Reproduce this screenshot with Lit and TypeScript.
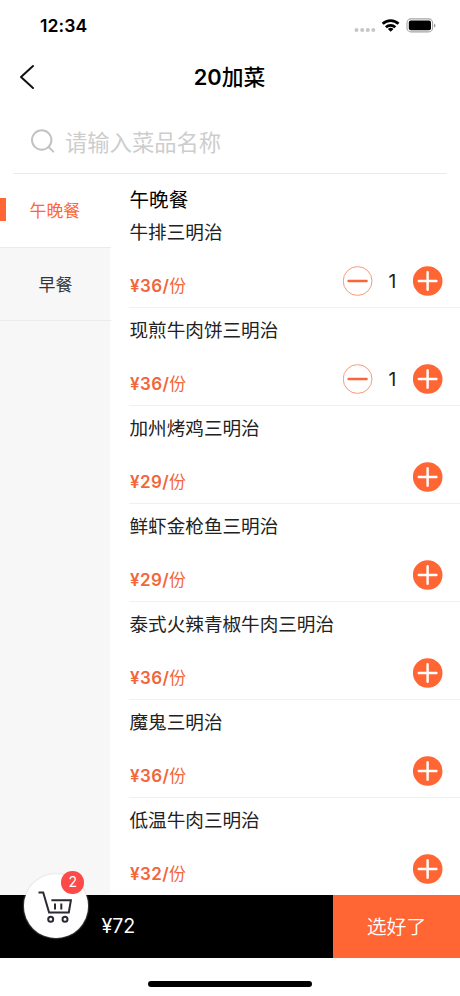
import { LitElement, html, css, svg, nothing } from "lit";
import { customElement, property, state } from "lit/decorators.js";
import { classMap } from "lit/directives/class-map.js";

interface Dish {
  name: string;
  price: number;
  count: number;
}

@customElement("status-bar")
class StatusBar extends LitElement {
  static styles = css`
    :host { display: flex; justify-content: space-between; align-items: center; height: 51px; padding: 0 24px 0 40px; box-sizing: border-box; }
    .time { font-weight: 600; font-size: 17.6px; letter-spacing: 0.1px; color: #000; }
    svg { display: block; }
  `;
  render() {
    return html`
      <span class="time">12:34</span>
      <svg width="82" height="20" viewBox="354 16 82 20">
        <g fill="#c6c6c8">
          ${[356.5, 362.2, 367.8, 373.3].map((x) => svg`<circle cx=${x} cy="30" r="2"/>`)}
        </g>
        <g fill="none" stroke="#000" stroke-width="2.7">
          <path d="M382.7 23.8a11.2 11.2 0 0 1 15.8 0"/>
          <path d="M385.9 27.2a6.8 6.8 0 0 1 9.4 0"/>
        </g>
        <path d="M387.9 28.9a4.2 4.2 0 0 1 5.6 0l-2.8 2.8z" fill="#000"/>
        <rect x="407" y="18.9" width="25.6" height="13" rx="4" fill="#fff" stroke="#a5a5a5" stroke-width="1.1"/>
        <rect x="408.8" y="20.6" width="22.2" height="9.6" rx="2" fill="#000"/>
        <path d="M434 23.4c2 .8 2 3.4 0 4.2z" fill="#999"/>
      </svg>
    `;
  }
}

@customElement("count-stepper")
class CountStepper extends LitElement {
  @property({ type: Number }) count = 0;
  static styles = css`
    :host { display: flex; align-items: center; }
    button { border: 0; padding: 0; background: none; display: block; }
    svg { display: block; }
    .count { width: 40px; text-align: center; font-size: 19.2px; line-height: 30px; color: #222; }
  `;
  private step(delta: number) {
    this.dispatchEvent(new CustomEvent("step", { detail: delta }));
  }
  render() {
    return html`
      ${this.count > 0
        ? html`<button @click=${() => this.step(-1)}>
              <svg width="30" height="30" viewBox="0 0 30 30">
                <circle cx="14.6" cy="15" r="14.4" fill="#fff" stroke="#f79a7c" stroke-width="1"/>
                <path d="M5.6 15H23.6" stroke="#f9663a" stroke-width="2.4" stroke-linecap="round"/>
              </svg>
            </button>
            <span class="count">${this.count}</span>`
        : nothing}
      <button @click=${() => this.step(1)}>
        <svg width="30" height="30" viewBox="0 0 30 30">
          <circle cx="14.7" cy="15" r="14.8" fill="#ff6633"/>
          <path d="M5.8 15H23.4M14.6 6.2V23.8" stroke="#fff" stroke-width="2.4" stroke-linecap="round"/>
        </svg>
      </button>
    `;
  }
}

@customElement("app-root")
class AppRoot extends LitElement {
  @state() private active = 0;
  @state() private dishes: Dish[] = [
    { name: "牛排三明治", price: 36, count: 1 },
    { name: "现煎牛肉饼三明治", price: 36, count: 1 },
    { name: "加州烤鸡三明治", price: 29, count: 0 },
    { name: "鲜虾金枪鱼三明治", price: 29, count: 0 },
    { name: "泰式火辣青椒牛肉三明治", price: 36, count: 0 },
    { name: "魔鬼三明治", price: 36, count: 0 },
    { name: "低温牛肉三明治", price: 32, count: 0 },
  ];
  private categories = ["午晚餐", "早餐"];

  static styles = css`
    :host { display: flex; flex-direction: column; height: 996px; width: 460px; overflow: hidden; background: #fff; color: #222;
      font-family: Inter, "Noto Sans CJK SC", sans-serif; }
    svg { display: block; }
    .nav { display: grid; grid-template-columns: 59.5px 1fr 60.5px; align-items: center; height: 52px; flex: none; }
    .back { padding-left: 19px; }
    h1 { margin: 0; text-align: center; font-size: 21.8px; line-height: 30px; font-weight: 600; color: #000; }
    h1 span { font-weight: 500; }
    .search { display: flex; align-items: center; gap: 9px; height: 71px; box-sizing: border-box; margin: 0 13px; padding: 6px 0 0 17px; border-bottom: 1px solid #ebebeb; flex: none;
      font-size: 22.3px; font-weight: 400; color: #cdcdcd; }
    .body { display: flex; flex: 1; min-height: 0; overflow: hidden; }
    .side { width: 110px; background: #f7f7f7; flex: none; }
    .tab { display: flex; align-items: center; justify-content: center; height: 73.5px; width: 111px; box-sizing: border-box; border-bottom: 1px solid #ebebeb; font-size: 16.9px; color: #333; font-weight: 400; padding-bottom: 1.5px; }
    .tab.on { background: #fff; color: #ff6633; justify-content: flex-start; }
    .tab.on::before { content: ""; width: 5.5px; height: 22.5px; background: #ff6633; margin-right: 24px; }
    .list { flex: 1; padding-left: 19.5px; }
    h2 { margin: 11px 0 0; font-size: 19.6px; line-height: 30px; font-weight: 400; color: #000; }
    .dish { height: 98.1px; box-sizing: border-box; border-bottom: 1px solid #f0f0f0; margin-left: -1px; padding: 9px 17.5px 0 1px; }
    .dish.first { height: 93px; padding-top: 4px; }
    .name { font-size: 18.6px; line-height: 27px; }
    .row { display: flex; justify-content: space-between; align-items: center; height: 30px; margin-top: 21px; }
    .price { font-size: 17px; font-weight: 600; color: #f2663a; padding: 7px 0 0 0.6px; line-height: 22px; letter-spacing: 0.35px; }
    .price span { font-weight: 400; font-size: 16.8px; }
    count-stepper { margin-top: -2px; }
    .foot { display: flex; height: 63px; flex: none; background: #000; color: #fff; }
    .cart { position: relative; width: 64px; height: 64px; margin: -20.7px 0 0 23.8px; border-radius: 50%; background: #fff; box-shadow: 0 0 2px #ccc; box-sizing: border-box; flex: none; }
    .badge { position: absolute; left: 37.7px; top: -3.1px; width: 22.6px; height: 22.6px; border-radius: 50%; background: #fb4a48; font-size: 14px; line-height: 22.6px; text-align: center; }
    .total { flex: 1; padding-left: 13.7px; font-size: 19.6px; line-height: 63px; font-weight: 400; }
    .done { width: 127px; height: 63px; border: 0; padding: 2px 0 0; background: #ff6633; color: #fff; font: 350 19.8px/61px Inter, "Noto Sans CJK SC", sans-serif; }
    .home { display: flex; justify-content: center; height: 38px; flex: none; padding-top: 23px; box-sizing: border-box; }
    .home i { width: 164px; height: 5.6px; border-radius: 3px; background: #000; }
  `;

  private change(index: number, delta: number) {
    this.dishes = this.dishes.map((d, i) => (i === index ? { ...d, count: Math.max(0, d.count + delta) } : d));
  }

  render() {
    const count = this.dishes.reduce((n, d) => n + d.count, 0);
    const total = this.dishes.reduce((n, d) => n + d.count * d.price, 0);
    return html`
      <status-bar></status-bar>
      <div class="nav">
        <svg class="back" width="16" height="26" viewBox="0 0 16 26">
          <path d="M14 2 2 13l12 11" fill="none" stroke="#111" stroke-width="2" stroke-linecap="round" stroke-linejoin="round"/>
        </svg>
        <h1>20<span>加菜</span></h1>
      </div>
      <div class="search">
        <svg width="26" height="26" viewBox="0 0 26 26" fill="none" stroke="#c2c2c2" stroke-width="2" stroke-linecap="round">
          <circle cx="11.7" cy="12" r="9.7"/><path d="m18.8 19.3 4.5 4.3"/>
        </svg>
        <span>请输入菜品名称</span>
      </div>
      <div class="body">
        <div class="side">
          ${this.categories.map((c, i) => html`<div class=${classMap({ tab: true, on: i === this.active })} @click=${() => (this.active = i)}>${c}</div>`)}
        </div>
        <div class="list">
          <h2>${this.categories[this.active]}</h2>
          ${this.dishes.map((d, i) => html`
            <div class=${classMap({ dish: true, first: i === 0 })}>
              <div class="name">${d.name}</div>
              <div class="row">
                <div class="price">¥${d.price}/<span>份</span></div>
                <count-stepper .count=${d.count} @step=${(e: CustomEvent) => this.change(i, e.detail)}></count-stepper>
              </div>
            </div>`)}
        </div>
      </div>
      <div class="foot">
        <div class="cart">
          <svg width="64" height="64" viewBox="0 0 64 64" fill="none" stroke="#292a33" stroke-width="2">
            <path d="M14.5 18.5h4.7l5.9 20h19.7l2.1-12.3H27.4"/>
            <path d="M31 29.5v6M37.3 29.5v6"/>
            <circle cx="26.7" cy="45.2" r="2.5"/><circle cx="41" cy="45.2" r="2.5"/>
          </svg>
          <span class="badge">${count}</span>
        </div>
        <div class="total">¥${total}</div>
        <button class="done">选好了</button>
      </div>
      <div class="home"><i></i></div>
    `;
  }
}
